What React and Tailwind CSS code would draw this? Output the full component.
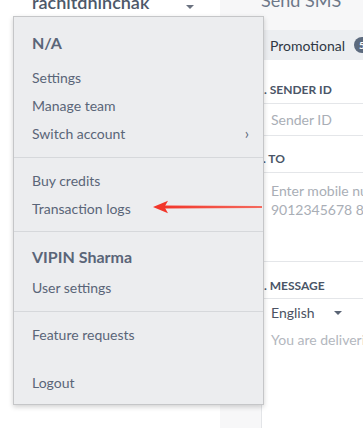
import React from 'react';

const menuText = 'text-[#5a6578]';

function MenuItem({ children, chevron }) {
  return (
    <div className={`h-7 flex items-center justify-between pl-[18px] pr-[14px] text-[14px] ${menuText}`}>
      <span>{children}</span>
      {chevron && <span className="text-[15px] leading-none">›</span>}
    </div>
  );
}

function MenuHeading({ children, h }) {
  return (
    <div className={`${h} flex items-center pl-[18px] text-[16px] font-bold ${menuText}`}>{children}</div>
  );
}

function AccountMenu() {
  return (
    <div className="absolute left-[13px] top-[16px] w-[251px] h-[389px] bg-[#ecedef] border border-[#c5c6c8] shadow-[0_2px_5px_rgba(0,0,0,0.18)] flex flex-col">
      <div className="pt-[9px] pb-[10px] border-b border-[#d6d8db]">
        <MenuHeading h="h-[34px] mb-[3px]">N/A</MenuHeading>
        <MenuItem>Settings</MenuItem>
        <MenuItem>Manage team</MenuItem>
        <MenuItem chevron>Switch account</MenuItem>
      </div>
      <div className="pt-[8px] pb-[9px] border-b border-[#d6d8db]">
        <MenuItem>Buy credits</MenuItem>
        <MenuItem>Transaction logs</MenuItem>
      </div>
      <div className="pt-[9px] pb-[10px] border-b border-[#d6d8db]">
        <MenuHeading h="h-[32px]">VIPIN Sharma</MenuHeading>
        <MenuItem>User settings</MenuItem>
      </div>
      <div className="pt-[8px] flex flex-col gap-[20px]">
        <MenuItem>Feature requests</MenuItem>
        <MenuItem>Logout</MenuItem>
      </div>
    </div>
  );
}

function Arrow() {
  return (
    <svg className="absolute left-[150px] top-[199px]" width="114" height="16" viewBox="0 0 114 16">
      <defs>
        <linearGradient id="shaft" x1="0" y1="0" x2="1" y2="0">
          <stop offset="0" stopColor="#f2362a" />
          <stop offset="1" stopColor="#f46a5e" />
        </linearGradient>
      </defs>
      <polygon points="13,6.4 112,7.1 112,8.9 13,9.6" fill="url(#shaft)" />
      <polygon points="3,8 18,1.8 14.5,8 18,14.2" fill="#f2362a" />
    </svg>
  );
}

export default function App() {
  return (
    <div className="relative w-[363px] h-[428px] overflow-hidden flex bg-white" style={{ fontFamily: 'Lato, "Liberation Sans", sans-serif' }}>
      {/* sidebar */}
      <aside className="w-[220px] shrink-0 bg-white">
        <div className="flex items-start justify-between pl-[32px] pr-[26px]">
          <span className="-mt-[7px] text-[18px] leading-none font-semibold text-[#4d5869] whitespace-nowrap">rachitdhinchak</span>
          <span className="mt-[5px] w-0 h-0 border-l-[4px] border-r-[4px] border-t-[4px] border-l-transparent border-r-transparent border-t-[#6b7280]" />
        </div>
      </aside>

      {/* main */}
      <main className="flex-1 min-w-0 overflow-hidden bg-[#f7f7f8] flex flex-col pl-[41px]">
        <div className="h-[30px]">
          <div className="-mt-[9px] text-[18px] leading-none text-[#6d7788] whitespace-nowrap">Send SMS</div>
        </div>
        <section className="flex-1 bg-white border-l border-[#e3e5e8] flex flex-col">
          <div className="h-[30px] bg-[#eceef1] flex items-center pl-[8px] whitespace-nowrap">
            <span className="text-[14px] text-[#2f3744]">Promotional</span>
            <span className="ml-[9px] w-[16px] h-[16px] rounded-full bg-[#5c6a7e] text-white text-[10px] font-bold flex items-center justify-center shrink-0">5</span>
          </div>
          <div className="-ml-[5px] pt-[24px] pb-[7px] border-b border-[#e4e6e9] text-[12px] leading-[12px] font-bold text-[#4a5567] whitespace-nowrap">1. SENDER ID</div>
          <div className="h-[32px] flex items-center pl-[9px] border-b border-[#e4e6e9] text-[14px] text-[#a9aeb6] whitespace-nowrap">Sender ID</div>
          <div className="-ml-[6px] pt-[17px] pb-[7px] border-b border-[#e4e6e9] text-[12px] leading-[12px] font-bold text-[#4a5567] whitespace-nowrap">2. TO</div>
          <div className="h-[89px] pt-[8px] pl-[9px] text-[14px] leading-[19px] text-[#a9aeb6] border-b border-[#e4e6e9] whitespace-nowrap">
            <div>Enter mobile numbers</div>
            <div>9012345678 8901234567</div>
          </div>
          <div className="-ml-[5px] pt-[18px] pb-[6px] border-b border-[#e4e6e9] text-[12px] leading-[12px] font-bold text-[#4a5567] whitespace-nowrap">3. MESSAGE</div>
          <div className="h-[26px] flex items-center pl-[9px] whitespace-nowrap">
            <span className="text-[14px] text-[#4b5263]">English</span>
            <span className="ml-[19px] mt-[2px] w-0 h-0 border-l-[4px] border-r-[4px] border-t-[4px] border-l-transparent border-r-transparent border-t-[#5a6475]" />
          </div>
          <div className="pt-[4px] pl-[9px] text-[14px] text-[#b3b7be] whitespace-nowrap">You are delivering</div>
        </section>
      </main>

      <AccountMenu />
      <Arrow />
    </div>
  );
}
